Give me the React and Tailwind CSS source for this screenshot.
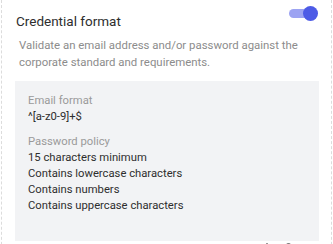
import React from 'react';

export default function App() {
  const rules = [
    '15 characters minimum',
    'Contains lowercase characters',
    'Contains numbers',
    'Contains uppercase characters',
  ];

  return (
    <div className="w-[333px] h-[244px] overflow-hidden bg-white px-px font-['Roboto',sans-serif]">
      <div className="h-[260px] border-x border-dashed border-[#dcdcdc] pl-[14px] pr-[12px] pt-[6px]">
        {/* Header */}
        <div className="flex items-start justify-between">
          <h2 className="pt-[5px] text-[13.5px] leading-[20px] text-[#2e2e2e]">Credential format</h2>
          <div className="relative mr-[1px] h-[15px] w-[29px]">
            <div className="absolute left-0 top-[3px] h-[9px] w-[22px] rounded-full bg-[#9ca3f2]" />
            <div className="absolute right-0 top-0 h-[15px] w-[15px] rounded-full bg-[#4d5be6]" />
          </div>
        </div>

        <p className="mt-[6px] pl-[3px] text-[11.4px] leading-[17px] text-[#8c8c8c]">
          Validate an email address and/or password against the corporate standard and requirements.
        </p>

        {/* Details */}
        <div className="mt-[10px] h-[160px] -ml-px bg-[#f2f3f5] px-[13px] pt-[12px] text-[11.25px] leading-[16px]">
          <div className="text-[#9a9a9a]">Email format</div>
          <div className="text-[#2e2e2e]">^[a-z0-9]+$</div>
          <div className="mt-[9px] text-[#9a9a9a]">Password policy</div>
          {rules.map((r) => (
            <div key={r} className="text-[#2e2e2e]">{r}</div>
          ))}
        </div>

        {/* Footer actions */}
        <div className="mt-[2px] flex justify-end gap-[18px] pr-[28px]">
          <div className="h-[8px] w-[2px] bg-[#9a9a9a]" />
          <div className="h-[8px] w-[5px] rounded-sm bg-[#7a7a7a]" />
        </div>
      </div>
    </div>
  );
}
